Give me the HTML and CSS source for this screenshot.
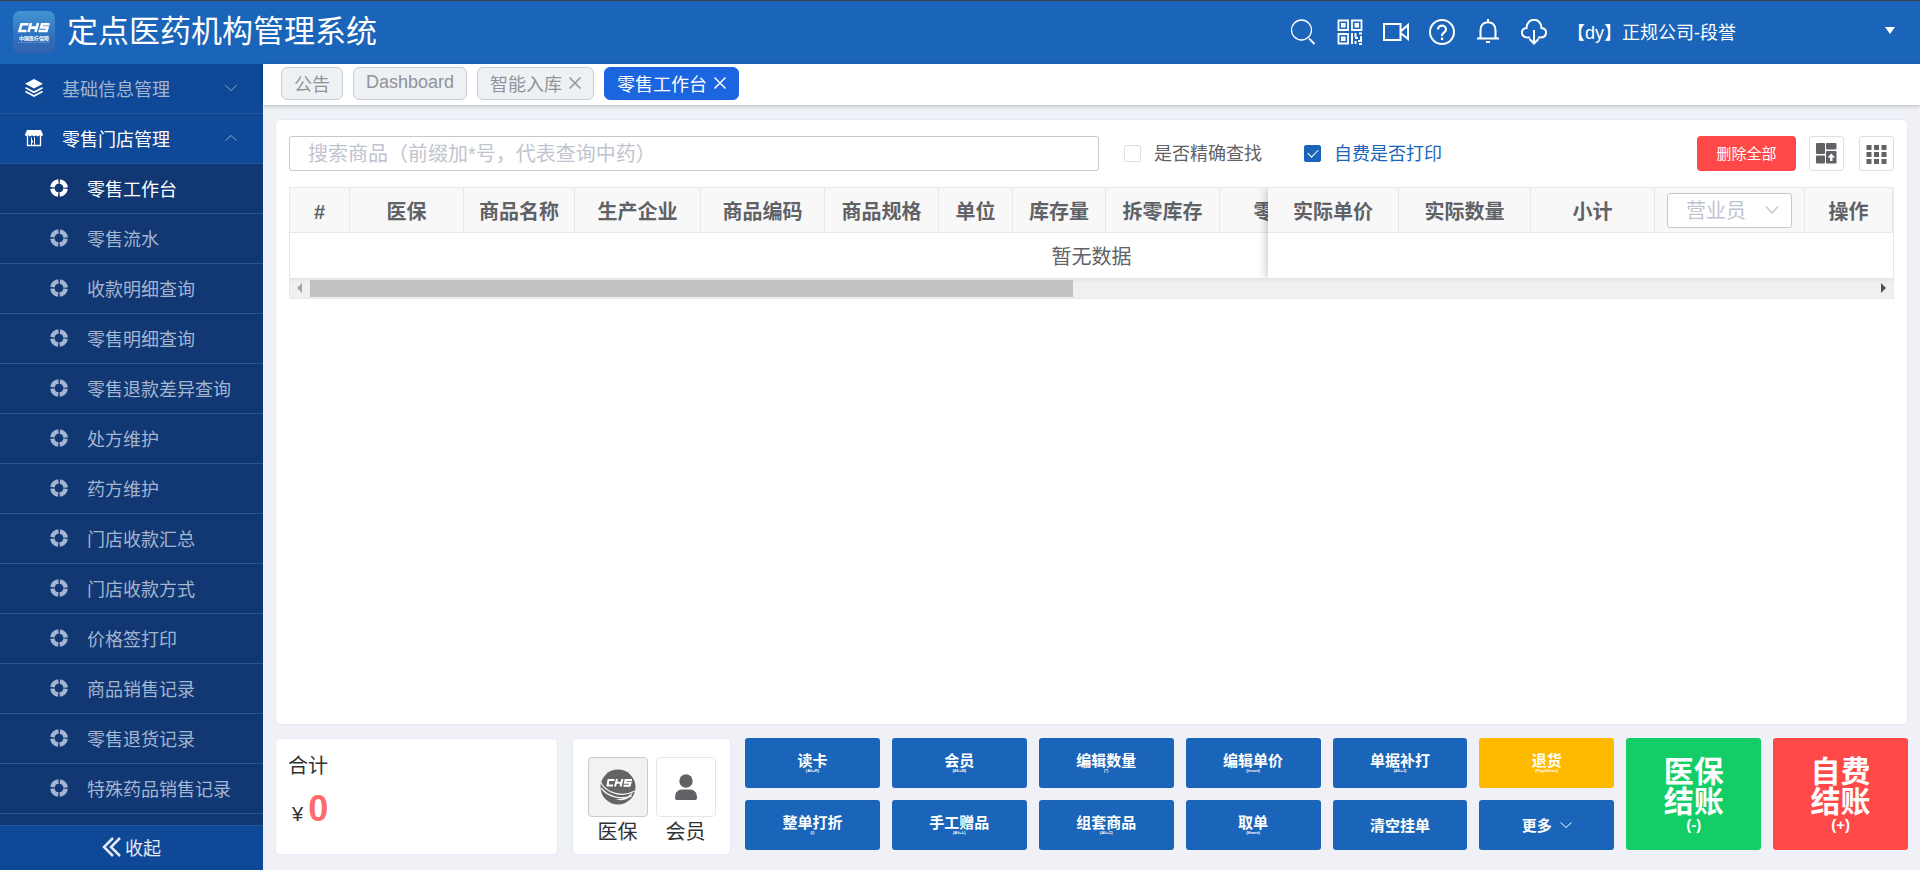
FILE: index.html
```html
<!DOCTYPE html>
<html lang="zh-CN">
<head>
<meta charset="utf-8">
<title>定点医药机构管理系统</title>
<link rel="stylesheet" href="styles.css">
</head>
<body>
<svg width="0" height="0" class="defs" aria-hidden="true">
  <symbol id="ring" viewBox="0 0 18 18">
    <circle cx="9" cy="9" r="6.6" fill="none" stroke="currentColor" stroke-width="4.500" stroke-dasharray="8.870 1.500" stroke-dashoffset="-.75"/>
  </symbol>
</svg>
<header class="topbar">
  <svg class="logo" viewBox="0 0 42 42" aria-hidden="true">
    <defs><linearGradient id="lg" x1="0" y1="0" x2="0" y2="1"><stop offset="0" stop-color="#4296d2"/><stop offset=".55" stop-color="#2f74c0"/><stop offset="1" stop-color="#3560ae"/></linearGradient></defs>
    <rect width="42" height="42" rx="7" fill="url(#lg)"/>
    <path d="M15.500 13.200H8.500L6.500 20H13.500M18 12L15.500 21M25 12L22.500 21M17 16.600H24M36.500 13.200H29L28 16.500H34.500L33.500 20H25.500" fill="none" stroke="#fff" stroke-width="2.600"/>
    <text x="21" y="29" class="logo-text">中国医疗保障</text>
    <path d="M5 31.500H37" stroke="#8fb5e2" stroke-width=".6" stroke-dasharray="1.500 1"/>
  </svg>
  <h1 class="brand">定点医药机构管理系统</h1>
  <nav class="tools">
    <button class="tool" aria-label="搜索"><svg viewBox="0 0 26 26"><circle cx="10.500" cy="11" r="10" stroke-width="1.300"/><path d="M18 19.500l5.500 5.500" stroke-width="1.800"/></svg></button>
    <button class="tool" aria-label="二维码"><svg viewBox="0 0 26 26"><path d="M1.500 1.500h9.500v9.500h-9.500zM15 1.500h9.500v9.500H15zM1.500 15h9.500v9.500h-9.500z" stroke-width="1.800"/><path d="M5 5h2.500v2.500H5zM18.500 5H21v2.500h-2.500zM5 18.500h2.500V21H5z" stroke-width="2"/><path d="M15 14v11M18.500 14v4M22 14.500h3M18 19h3M21 22h4M24 17v4M18.500 22v3M22 25h3" stroke-width="2"/></svg></button>
    <button class="tool" aria-label="视频"><svg viewBox="0 0 26 26"><path d="M1 5h16.500v16H1zM17.500 12.500L25 6v14l-7.500-6"/></svg></button>
    <button class="tool" aria-label="帮助"><svg viewBox="0 0 26 26"><circle cx="13" cy="13" r="12"/><path d="M9 10.500c0-5.300 8-5.300 8 0 0 3-4 3-4 6.500M13 18.500v2.500" stroke-width="2.200"/></svg></button>
    <button class="tool" aria-label="通知"><svg viewBox="0 0 26 26"><path d="M5.500 19.500v-8.500c0-10.500 15-10.500 15 0v8.500M2 19.500h22M13 0v3M11 23h4"/></svg></button>
    <button class="tool" aria-label="下载"><svg viewBox="0 0 26 26"><path d="M9 18.500H6.500C-.5 18.500-1 9.500 5.500 9 6-2 20-2 20.500 9c6.500.5 6 9.500-1 9.500H17M13 11v13M8.500 20l4.500 4.500 4.500-4.500"/></svg></button>
  </nav>
  <button class="user"><span>【dy】正规公司-段誉</span><span class="caret"></span></button>
</header>
<div class="shell">
  <aside class="side">
    <nav class="menu">
      <a class="item" href="#"><svg class="ico bright" viewBox="0 0 18 18"><path d="M9 0l9 4.800-9 4.800-9-4.800z" fill="currentColor"/><path d="M.5 8.800L9 13.200l8.500-4.400M.5 12.600L9 17l8.500-4.400" fill="none" stroke="currentColor" stroke-width="1.700"/></svg><span class="name">基础信息管理</span><svg class="arrow" viewBox="0 0 12 6"><path d="M.5.5L6 5.500 11.500.5"/></svg></a>
      <a class="item on" href="#"><svg class="ico bright" viewBox="0 0 18 18"><path d="M2 1h14l2 4.500c0 2.200-3 2.200-3.200.5-.6 1.800-3.400 1.800-3.800 0-.6 1.800-3.400 1.800-4 0-.6 1.800-3.400 1.800-3.800 0C2.800 7.700 0 7.700 0 5.500z" fill="currentColor"/><path d="M2.500 7v9.500h13V7" fill="none" stroke="currentColor" stroke-width="1.300"/><path d="M6.500 16V8.500M9.500 16V8.500M7.500 11.500v2" fill="none" stroke="currentColor"/></svg><span class="name">零售门店管理</span><svg class="arrow" viewBox="0 0 12 6"><path d="M.5 5.500L6 .5l5.500 5"/></svg></a>
      <a class="item sub on" href="#"><svg class="ico"><use href="#ring"/></svg><span class="name">零售工作台</span></a>
      <a class="item sub" href="#"><svg class="ico"><use href="#ring"/></svg><span class="name">零售流水</span></a>
      <a class="item sub" href="#"><svg class="ico"><use href="#ring"/></svg><span class="name">收款明细查询</span></a>
      <a class="item sub" href="#"><svg class="ico"><use href="#ring"/></svg><span class="name">零售明细查询</span></a>
      <a class="item sub" href="#"><svg class="ico"><use href="#ring"/></svg><span class="name">零售退款差异查询</span></a>
      <a class="item sub" href="#"><svg class="ico"><use href="#ring"/></svg><span class="name">处方维护</span></a>
      <a class="item sub" href="#"><svg class="ico"><use href="#ring"/></svg><span class="name">药方维护</span></a>
      <a class="item sub" href="#"><svg class="ico"><use href="#ring"/></svg><span class="name">门店收款汇总</span></a>
      <a class="item sub" href="#"><svg class="ico"><use href="#ring"/></svg><span class="name">门店收款方式</span></a>
      <a class="item sub" href="#"><svg class="ico"><use href="#ring"/></svg><span class="name">价格签打印</span></a>
      <a class="item sub" href="#"><svg class="ico"><use href="#ring"/></svg><span class="name">商品销售记录</span></a>
      <a class="item sub" href="#"><svg class="ico"><use href="#ring"/></svg><span class="name">零售退货记录</span></a>
      <a class="item sub" href="#"><svg class="ico"><use href="#ring"/></svg><span class="name">特殊药品销售记录</span></a>
    </nav>
    <button class="collapse"><svg viewBox="0 0 20 20"><path d="M11 1L2 10l9 9M18 1l-9 9 9 9"/></svg>收起</button>
  </aside>
  <main class="main">
    <nav class="tabs">
      <button class="tab">公告</button>
      <button class="tab">Dashboard</button>
      <button class="tab">智能入库<svg viewBox="0 0 12 12"><path d="M.5.5l11 11M11.500.5l-11 11"/></svg></button>
      <button class="tab current">零售工作台<svg viewBox="0 0 12 12"><path d="M.5.5l11 11M11.500.5l-11 11"/></svg></button>
    </nav>
    <div class="content">
      <section class="card work">
        <div class="filters">
          <input class="search" type="text" aria-label="搜索商品" placeholder="搜索商品（前缀加*号，代表查询中药）">
          <label class="check"><input type="checkbox"><span>是否精确查找</span></label>
          <label class="check"><input type="checkbox" checked><span>自费是否打印</span></label>
          <div class="actions">
            <button class="delete">删除全部</button>
            <button class="square" aria-label="布局"><svg viewBox="0 0 21 21"><rect width="9" height="11" rx="1"/><rect x="10" width="10.500" height="6.500" rx="1"/><rect y="12.500" width="9" height="8" rx="1"/><rect x="10" y="8" width="10.500" height="12.500" rx="1"/><path d="M15.300 10.500l3.700 4h-2.500V18h-2.400v-3.500h-2.500z" fill="#fff"/></svg></button>
            <button class="square" aria-label="列设置"><svg viewBox="0 0 21 21"><path d="M.5 2h5v5h-5zM8 2h5v5H8zM15.500 2h5v5h-5zM.5 9h5v5h-5zM8 9h5v5H8zM15.500 9h5v5h-5zM.5 16h5v5h-5zM8 16h5v5H8zM15.500 16h5v5h-5z"/></svg></button>
          </div>
        </div>
        <div class="grid">
          <div class="view">
            <table class="scrolling">
              <colgroup><col class="w60"><col class="w114"><col class="w111"><col class="w126"><col class="w124"><col class="w114"><col class="w74"><col class="w93"><col class="w114"><col class="w148"></colgroup>
              <thead><tr><th>#</th><th>医保</th><th>商品名称</th><th>生产企业</th><th>商品编码</th><th>商品规格</th><th>单位</th><th>库存量</th><th>拆零库存</th><th>零售单价</th></tr></thead>
            </table>
            <div class="empty">暂无数据</div>
            <div class="pinned">
              <table>
                <colgroup><col class="w131"><col class="w132"><col class="w124"><col class="w150"><col class="w88"></colgroup>
                <thead><tr><th>实际单价</th><th>实际数量</th><th>小计</th><th class="pick"><select aria-label="营业员"><option>营业员</option></select></th><th>操作</th></tr></thead>
              </table>
            </div>
          </div>
          <div class="scrollbar"><span class="left"></span><span class="rail"><span class="thumb"></span></span><span class="right"></span></div>
        </div>
      </section>
      <div class="bottom">
        <section class="card sum">
          <div class="sum-label">合计</div>
          <div class="amount"><span>¥</span><strong>0</strong></div>
        </section>
        <section class="card pay-type">
          <button class="type chosen"><span class="box"><svg viewBox="0 0 36 36"><circle cx="18" cy="18" r="17.500" fill="#636466"/><path d="M0 12c5 12 22 17 35 10M1 19c7 9 20 12 31 8" fill="none" stroke="#f2f2f3" stroke-width="1.300"/><path d="M14 30c8 1 14-2 19-7-3 7-9 10-19 7z" fill="#f2f2f3"/><path d="M14.500 11H8.500L7.500 16.500H13M17 10L15 17.500M22.500 10L20.500 17.500M16 13.800H21.500M32 11H25.500L25 13.800H30.500L29.500 16.700H23.500" fill="none" stroke="#fff" stroke-width="2"/></svg></span>医保</button>
          <button class="type"><span class="box"><svg viewBox="0 0 36 36"><circle cx="18" cy="12" r="6.700" fill="#606266"/><path d="M7 29c0-7 4-8.500 8-8.500h6c4 0 8 1.500 8 8.500 0 1.500-1 2-2 2H9c-1 0-2-.5-2-2z" fill="#606266"/></svg></span>会员</button>
        </section>
        <div class="keys">
          <button class="key">读卡<small>(Alt+R)</small></button>
          <button class="key">会员<small>(Alt+M)</small></button>
          <button class="key">编辑数量<small>(*)</small></button>
          <button class="key">编辑单价<small>(Insert)</small></button>
          <button class="key">单据补打<small>(Alt+J)</small></button>
          <button class="key refund">退货<small>(PageDown)</small></button>
          <button class="key settle green"><span>医保</span><span>结账</span><small>(-)</small></button>
          <button class="key settle red"><span>自费</span><span>结账</span><small>(+)</small></button>
          <button class="key">整单打折<small>(/)</small></button>
          <button class="key">手工赠品<small>(Alt+L)</small></button>
          <button class="key">组套商品<small>(Alt+Z)</small></button>
          <button class="key">取单<small>(Home)</small></button>
          <button class="key">清空挂单</button>
          <button class="key more">更多<svg viewBox="0 0 12 6"><path d="M.5.5L6 5.500 11.500.5"/></svg></button>
        </div>
      </div>
    </div>
  </main>
</div>
</body>
</html>
```

FILE: styles.css
```css
* { box-sizing: border-box; }
body {
  margin: 0;
  height: 100vh;
  display: flex;
  flex-direction: column;
  overflow: hidden;
  font-family: "Liberation Sans", "Noto Sans CJK SC", sans-serif;
  font-size: 18px;
  color: #303133;
}
button, input, select { font: inherit; color: inherit; margin: 0; }
button { border: 0; background: none; padding: 0; cursor: pointer; }
.defs { position: absolute; }

.topbar {
  display: flex;
  align-items: center;
  height: 64px;
  flex: none;
  padding: 0 25px 2px 13px;
  background: #1a65b9;
  border-top: 1px solid #3c4048;
  color: #fff;
}
.logo { width: 42px; height: 42px; flex: none; }
.logo-text { font-size: 5px; font-weight: 700; fill: #fff; text-anchor: middle; }
.brand { margin: 0 auto 0 12px; font-size: 31px; font-weight: 400; line-height: 40px; }
.tools { display: flex; gap: 20px; }
.tool { width: 26px; height: 26px; }
.tool svg { display: block; width: 26px; height: 26px; fill: none; stroke: #fff; stroke-width: 2; }
.user { display: flex; align-items: center; justify-content: space-between; width: 328px; margin-left: 20px; padding-bottom: 2px; }
.caret { border: 5px solid transparent; border-top: 7px solid #fff; border-bottom: 0; }

.shell { display: flex; flex: 1; min-height: 0; }
.side { width: 263px; flex: none; display: flex; flex-direction: column; background: #123873; }
.menu { flex: 1; min-height: 0; overflow: hidden; }
.item {
  display: flex;
  align-items: center;
  height: 50px;
  padding: 0 26px 2px 25px;
  border-bottom: 1px solid #27569b;
  background: #0f4896;
  color: #a3b5d1;
  text-decoration: none;
}
.sub { padding-left: 50px; background: #123873; }
.on { color: #fff; }
.ico { width: 18px; height: 18px; flex: none; }
.bright { color: #fff; }
.name { flex: 1; margin-left: 19px; }
.arrow { width: 12px; height: 6px; fill: none; stroke: #8ba4ca; }
.collapse {
  display: flex;
  align-items: center;
  justify-content: center;
  gap: 3px;
  height: 45px;
  flex: none;
  padding-bottom: 2px;
  border-top: 1px solid #27569b;
  background: #0f4896;
  color: #e3eaf4;
}
.collapse svg { width: 20px; height: 20px; fill: none; stroke: currentColor; stroke-width: 2.5; }

.main { flex: 1; min-width: 0; display: flex; flex-direction: column; background: #f0f1f6; }
.tabs {
  display: flex;
  align-items: flex-start;
  gap: 10px;
  height: 41px;
  flex: none;
  padding: 3px 18px;
  background: #fff;
  box-shadow: 0 1px 4px rgba(0, 21, 41, .25);
}
.tab {
  display: flex;
  align-items: center;
  gap: 7px;
  height: 33px;
  padding: 0 12px 2px;
  border: 1px solid #c8ced6;
  border-radius: 6px;
  background: #eef1f4;
  color: #909399;
}
.tab svg { width: 12px; height: 12px; fill: none; stroke: currentColor; stroke-width: 1.5; }
.current { background: #1b66e0; border-color: #1b66e0; color: #fff; }

.content { flex: 1; min-height: 0; display: flex; flex-direction: column; gap: 13px; padding: 14px 12px 15px; }
.card { border: 1px solid #e6eaf5; border-radius: 5px; background: #fff; }
.work { flex: 1; min-height: 0; padding: 16px 13px; }
.filters { display: flex; align-items: center; margin-bottom: 16px; }
.search {
  flex: 0 1 810px;
  min-width: 0;
  height: 35px;
  padding: 2px 18px 0;
  border: 1px solid #c8c8c8;
  border-radius: 3px;
  font-size: 20px;
  outline: 0;
}
.search::placeholder { color: #bfc4cf; opacity: 1; }
.check { display: flex; align-items: center; gap: 13px; margin-left: 25px; color: #606266; white-space: nowrap; }
.check span { padding-bottom: 3px; }
.check + .check { margin-left: 42px; }
.check input {
  appearance: none;
  display: grid;
  place-items: center;
  width: 17px;
  height: 17px;
  border: 1px solid #dcdfe6;
  border-radius: 2px;
  background: #fff;
}
.check input:checked { background: #1a65b9; border-color: #1a65b9; }
.check input:checked::before {
  content: "";
  width: 9px;
  height: 5px;
  margin-bottom: 3px;
  border: solid #fff;
  border-width: 0 0 1px 1px;
  transform: rotate(-45deg);
}
.check:has(input:checked) { color: #1a65b9; }
.actions { display: flex; margin-left: auto; }
.delete { width: 99px; height: 35px; margin-right: 13px; padding-bottom: 2px; border-radius: 4px; background: #ff4949; color: #fff; font-size: 15px; }
.square {
  display: grid;
  place-items: center;
  width: 35px;
  height: 35px;
  border: 1px solid #dcdfe6;
  border-radius: 3px;
  background: #fff;
}
.square + .square { margin-left: 15px; }
.square svg { width: 21px; height: 21px; fill: #606266; }

.grid { border: 1px solid #e8e8e8; }
.view { position: relative; overflow: hidden; }
table { table-layout: fixed; border-collapse: separate; border-spacing: 0; }
.scrolling { width: 1078px; }
th {
  height: 45px;
  padding: 3px 0 0;
  border-right: 1px solid #e8e8e8;
  border-bottom: 1px solid #e8e8e8;
  background: #f8f8f9;
  color: #606266;
  font-size: 20px;
  line-height: 30px;
}
.w60 { width: 60px; }
.w74 { width: 74px; }
.w88 { width: 88px; }
.w93 { width: 93px; }
.w111 { width: 111px; }
.w114 { width: 114px; }
.w124 { width: 124px; }
.w126 { width: 126px; }
.w131 { width: 131px; }
.w132 { width: 132px; }
.w148 { width: 148px; }
.w150 { width: 150px; }
.empty { height: 45px; padding-top: 3px; line-height: 42px; text-align: center; font-size: 20px; color: #606266; }
.pinned { position: absolute; top: 0; right: 0; bottom: 0; background: #fff; box-shadow: 0 0 10px rgba(0, 0, 0, .3); }
.pinned table { width: 625px; }
.pick { padding: 0; }
.pick select {
  appearance: none;
  display: block;
  width: 125px;
  height: 35px;
  margin: 0 auto;
  padding: 2px 18px 0;
  border: 1px solid #c8c8c8;
  border-radius: 3px;
  background: #fff url("data:image/svg+xml,%3Csvg xmlns='http://www.w3.org/2000/svg' viewBox='0 0 14 8'%3E%3Cpath d='M1 .5l6 6.500L13 .5' fill='none' stroke='%23bfc4cf' stroke-width='1.300'/%3E%3C/svg%3E") no-repeat right 12px center / 14px 8px;
  color: #bfc4cf;
  font-size: 20px;
  font-weight: 400;
}
.scrollbar {
  display: flex;
  align-items: center;
  gap: 8px;
  height: 20px;
  padding: 0 7px;
  background: linear-gradient(#e4e4e4, #f0f0f0 5px);
}
.rail { flex: 1; }
.thumb { display: block; width: 48.8%; height: 17px; background: #c1c1c1; }
.left, .right { border: 5px solid transparent; }
.left { border-left: 0; border-right-color: #a3a3a3; }
.right { border-right: 0; border-left-color: #505050; }

.bottom { display: flex; gap: 14px; flex: none; align-items: flex-start; }
.sum { width: 283px; height: 117px; padding: 12px; }
.sum-label { font-size: 20px; line-height: 30px; }
.amount { display: flex; align-items: baseline; gap: 5px; padding: 8px 4px; line-height: 40px; font-size: 20px; }
.amount strong { font-size: 36px; color: #ff6b6b; }
.pay-type { width: 159px; height: 117px; display: flex; justify-content: center; align-items: flex-start; gap: 8px; padding-top: 18px; }
.type { display: flex; flex-direction: column; font-size: 20px; line-height: 30px; align-items: center; }
.box { display: grid; place-items: center; width: 60px; height: 60px; border: 1px solid #e6e6e6; border-radius: 4px; }
.box svg { width: 36px; height: 36px; }
.chosen .box { border-color: #ccc; background: #f2f2f3; }
.keys { flex: 1; display: grid; grid-template-columns: repeat(8, 1fr); grid-template-rows: 50px 50px; gap: 12px; }
.key {
  display: flex;
  flex-direction: column;
  align-items: center;
  justify-content: center;
  border-radius: 3px;
  background: #1a65b9;
  color: #fff;
  font-size: 15px;
  font-weight: 700;
  line-height: 15px;
}
.key small { font-size: 4px; line-height: 6px; }
.refund { background: #ffba00; }
.settle { grid-row: span 2; font-size: 30px; line-height: 30px; }
.settle small { font-size: 15px; line-height: 15px; }
.green { background: #13ce66; }
.red { background: #ff4949; }
.more { flex-direction: row; gap: 8px; }
.more svg { width: 12px; height: 6px; fill: none; stroke: #fff; }
```
